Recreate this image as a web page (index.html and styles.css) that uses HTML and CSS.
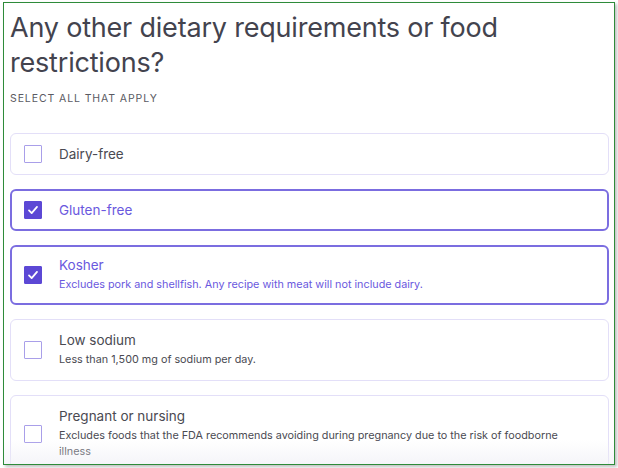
FILE: index.html
```html
<!DOCTYPE html>
<html lang="en">
<head>
  <meta charset="UTF-8">
  <meta name="viewport" content="width=device-width, initial-scale=1.0">
  <title>Dietary requirements</title>
  <link rel="stylesheet" href="styles.css">
</head>
<body>
  <div class="frame">
    <div class="question">
      <h1>Any other dietary requirements or food restrictions?</h1>
      <p class="hint">Select all that apply</p>

      <div class="options">
        <label class="option">
          <span class="box"></span>
          <span class="text"><span class="name">Dairy-free</span></span>
        </label>
        <label class="option checked">
          <span class="box"><svg viewBox="0 0 18 18"><path d="M4.5 9.5l3 3 6-7" /></svg></span>
          <span class="text"><span class="name">Gluten-free</span></span>
        </label>
        <label class="option checked">
          <span class="box"><svg viewBox="0 0 18 18"><path d="M4.5 9.5l3 3 6-7" /></svg></span>
          <span class="text">
            <span class="name">Kosher</span>
            <span class="desc">Excludes pork and shellfish. Any recipe with meat will not include dairy.</span>
          </span>
        </label>
        <label class="option">
          <span class="box"></span>
          <span class="text">
            <span class="name">Low sodium</span>
            <span class="desc">Less than 1,500 mg of sodium per day.</span>
          </span>
        </label>
        <label class="option">
          <span class="box"></span>
          <span class="text">
            <span class="name">Pregnant or nursing</span>
            <span class="desc">Excludes foods that the FDA recommends avoiding during pregnancy due to the risk of foodborne illness</span>
          </span>
        </label>
      </div>
    </div>
    <div class="fade"></div>
  </div>
</body>
</html>
```

FILE: styles.css
```css
*, *:before, *:after{
  padding: 0;
  margin: 0;
  box-sizing: border-box;
}
body{
  background: #ffffff;
  font-family: Inter, "Noto Sans", sans-serif;
  padding: 2px 3px 3px 3px;
  height: 468px;
  overflow: hidden;
}
.frame{
  height: 463px;
  border: 1.5px solid #2e8b3a;
  box-shadow: 2px 2px 3px rgba(0,0,0,0.25);
  overflow: hidden;
  position: relative;
}
.question{
  padding: 7px 5px 0 6px;
}
h1{
  font-size: 27px;
  font-weight: 400;
  line-height: 35px;
  color: #43434e;
  letter-spacing: -0.2px;
  padding-right: 90px;
}
.hint{
  margin-top: 13px;
  font-size: 10.5px;
  line-height: 12px;
  letter-spacing: 0.9px;
  text-transform: uppercase;
  color: #5a5a62;
}
.options{
  margin-top: 28px;
  display: flex;
  flex-direction: column;
  gap: 14px;
}
.option{
  display: flex;
  align-items: center;
  min-height: 42px;
  padding: 0 40px 0 13px;
  border: 1px solid #e3dff8;
  border-radius: 6px;
  background: #ffffff;
}
.option.checked{
  border: 2px solid #7b6de0;
  padding: 0 39px 0 12px;
}
.box{
  flex: none;
  width: 18px;
  height: 18px;
  border: 1.5px solid #a99fe9;
  border-radius: 1px;
  margin-right: 17px;
  display: flex;
  align-items: center;
  justify-content: center;
}
.checked .box{
  background: #5c48d5;
  border-color: #5c48d5;
}
.box svg{
  width: 16px;
  height: 16px;
  fill: none;
  stroke: #ffffff;
  stroke-width: 2;
  stroke-linecap: round;
  stroke-linejoin: round;
}
.text{
  display: flex;
  flex-direction: column;
  gap: 4px;
  padding: 12px 0;
}
.checked .text{
  padding: 10px 0;
}
.name{
  font-size: 13.5px;
  line-height: 16px;
  color: #4a4a52;
}
.desc{
  font-size: 10.8px;
  line-height: 16px;
  color: #4a4a52;
}
.checked .name, .checked .desc{
  color: #6a58de;
}
.fade{
  position: absolute;
  left: 0;
  right: 0;
  bottom: 0;
  height: 24px;
  background: linear-gradient(rgba(255,255,255,0), rgba(238,238,245,0.6));
}
```
